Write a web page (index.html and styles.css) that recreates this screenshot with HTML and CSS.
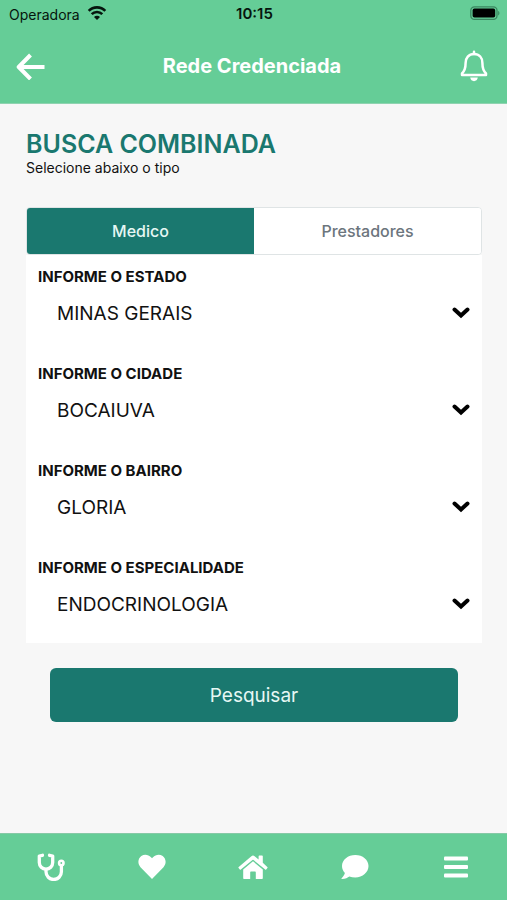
FILE: index.html
```html
<!DOCTYPE html>
<html lang="pt-BR">
<head>
<meta charset="utf-8">
<meta name="viewport" content="width=device-width, initial-scale=1">
<title>Rede Credenciada</title>
<link rel="stylesheet" href="styles.css">
</head>
<body>
<header class="top">
  <div class="status">
    <div class="carrier">
      <span>Operadora</span>
      <svg width="20" height="16" viewBox="0 0 20 16" fill="none" stroke="currentColor" stroke-width="2.6" aria-hidden="true">
        <path d="M1.700 4.900a11.600 11.600 0 0 1 16.600 0"/>
        <path d="M4.700 8.200a7.500 7.500 0 0 1 10.600 0"/>
        <path d="M10 13.900l-3-3a4.200 4.200 0 0 1 6 0z" fill="currentColor" stroke="none"/>
      </svg>
    </div>
    <time class="clock">10:15</time>
    <svg class="battery" width="30" height="16" viewBox="0 0 30 16" aria-hidden="true">
      <rect x="0.8" y="0.8" width="26.2" height="12.6" rx="3.6" fill="none" stroke="#3a8760" stroke-width="1.3"/>
      <rect x="2.6" y="2.6" width="22.6" height="9" rx="1.8" fill="#000"/>
      <path d="M28.200 5v4.400c1.600-.6 1.600-3.800 0-4.400z" fill="#3a8760"/>
    </svg>
  </div>
  <div class="bar">
    <button class="icon-btn" type="button" aria-label="Voltar">
      <svg width="30" height="28" viewBox="0 0 30 28" fill="none" stroke="currentColor" stroke-width="4" stroke-linejoin="round" aria-hidden="true">
        <path d="M14.500 3L2.700 15 14.500 27M3 15H28.500"/>
      </svg>
    </button>
    <h1 class="title">Rede Credenciada</h1>
    <button class="icon-btn end" type="button" aria-label="Notificações">
      <svg width="28" height="32" viewBox="0 0 28 32" fill="none" stroke="currentColor" stroke-width="2.500" stroke-linejoin="round" stroke-linecap="round" aria-hidden="true">
        <path d="M14 4C8.600 4 5.600 8 5.600 13c0 6-1.300 8.300-3.600 10.500V25h24v-1.500C23.700 21.300 22.400 19 22.400 13c0-5-3-9-8.400-9z"/>
        <path d="M14 1.800V4"/>
        <path d="M10.200 27.600h7.600c-.3 2.200-1.900 3.600-3.800 3.600s-3.500-1.400-3.800-3.600z" fill="currentColor" stroke="none"/>
      </svg>
    </button>
  </div>
</header>

<main class="content">
  <h2 class="heading">BUSCA COMBINADA</h2>
  <p class="sub">Selecione abaixo o tipo</p>

  <form class="search">
    <div class="tabs" role="tablist">
      <button class="tab active" type="button" role="tab" aria-selected="true">Medico</button>
      <button class="tab" type="button" role="tab" aria-selected="false">Prestadores</button>
    </div>
    <div class="fields">
      <div class="field">
        <label for="estado">INFORME O ESTADO</label>
        <div class="picker">
          <select id="estado"><option>MINAS GERAIS</option></select>
          <svg class="chevron" width="18" height="12" viewBox="0 0 18 12" aria-hidden="true"><path d="M2.500 2.500L9 8.500 15.500 2.500"/></svg>
        </div>
      </div>
      <div class="field">
        <label for="cidade">INFORME O CIDADE</label>
        <div class="picker">
          <select id="cidade"><option>BOCAIUVA</option></select>
          <svg class="chevron" width="18" height="12" viewBox="0 0 18 12" aria-hidden="true"><path d="M2.500 2.500L9 8.500 15.500 2.500"/></svg>
        </div>
      </div>
      <div class="field">
        <label for="bairro">INFORME O BAIRRO</label>
        <div class="picker">
          <select id="bairro"><option>GLORIA</option></select>
          <svg class="chevron" width="18" height="12" viewBox="0 0 18 12" aria-hidden="true"><path d="M2.500 2.500L9 8.500 15.500 2.500"/></svg>
        </div>
      </div>
      <div class="field">
        <label for="especialidade">INFORME O ESPECIALIDADE</label>
        <div class="picker">
          <select id="especialidade"><option>ENDOCRINOLOGIA</option></select>
          <svg class="chevron" width="18" height="12" viewBox="0 0 18 12" aria-hidden="true"><path d="M2.500 2.500L9 8.500 15.500 2.500"/></svg>
        </div>
      </div>
    </div>
    <button class="submit" type="button">Pesquisar</button>
  </form>
</main>

<nav class="dock" aria-label="Principal">
  <a href="#medicos" aria-label="Médicos">
    <svg width="28" height="28" viewBox="0 0 28 28" fill="none" stroke="currentColor" stroke-width="3.300" stroke-linecap="round" aria-hidden="true">
      <path d="M5.500 2.300L2.300 3v6.500a6.700 6.700 0 0 0 13.400 0V3l-3.200-.7" stroke-linejoin="round"/>
      <path d="M9 16.500v2.300a7.700 7.700 0 0 0 15.400 0V13"/>
      <circle cx="24.300" cy="10" r="2.200" stroke-width="2.600"/>
    </svg>
  </a>
  <a href="#favoritos" aria-label="Favoritos">
    <svg width="28" height="26" viewBox="0 0 28 26" fill="currentColor" aria-hidden="true">
      <path d="M14 25L2.500 13.200C-.8 9.600 0 4.300 3.300 2 6.500-.2 10.500.6 13 3.200l1 1 1-1C17.500.6 21.500-.2 24.700 2 28 4.300 28.800 9.600 25.500 13.200z"/>
    </svg>
  </a>
  <a href="#inicio" aria-label="Início">
    <svg width="30" height="26" viewBox="0 0 30 26" fill="currentColor" aria-hidden="true">
      <path d="M15 7.300L5.200 15.400V24c0 .6.400 1 1 1h6v-6.500c0-.6.400-1 1-1h3.600c.6 0 1 .4 1 1V25h6c.6 0 1-.4 1-1v-8.600z"/>
      <path d="M24.800 8.800V2.300c0-.5-.3-.8-.8-.8h-2.600c-.5 0-.8.300-.8.800v3.200l-4-3.300a2.600 2.600 0 0 0-3.200 0L.7 12.900c-.4.300-.4.800-.1 1.100l1.200 1.500c.3.300.7.400 1 .1L14.500 6a.8.8 0 0 1 1 0l11.700 9.600c.3.300.7.200 1-.1l1.200-1.500c.3-.3.300-.8-.1-1.100z"/>
    </svg>
  </a>
  <a href="#mensagens" aria-label="Mensagens">
    <svg width="28" height="26" viewBox="0 0 28 26" fill="currentColor" aria-hidden="true">
      <path d="M14.300 1C7 1 1 5.900 1 12c0 2.600 1.100 5 2.900 6.900C3.300 21.300 1.200 23.500.6 24.200c-.3.300-.1.900.4.900 3.300 0 5.900-1.600 7.300-2.600 1.800.6 3.800 1 6 1C21.700 23.500 27.500 18.200 27.500 12S21.700 1 14.300 1z"/>
    </svg>
  </a>
  <a href="#menu" aria-label="Menu">
    <svg width="26" height="24" viewBox="0 0 26 24" fill="currentColor" aria-hidden="true">
      <rect x="1" y="1.500" width="24" height="4" rx="1"/>
      <rect x="1" y="10" width="24" height="4" rx="1"/>
      <rect x="1" y="18.500" width="24" height="4" rx="1"/>
    </svg>
  </a>
</nav>
</body>
</html>
```

FILE: styles.css
```css
:root {
  --green: #65cd97;
  --teal: #1a786f;
  --page: #f7f7f7;
}

* {
  box-sizing: border-box;
}

body {
  margin: 0;
  min-height: 100vh;
  display: flex;
  flex-direction: column;
  background: var(--page);
  color: #111;
  font-family: Inter, "Liberation Sans", sans-serif;
}

button,
select {
  font-family: inherit;
}

svg {
  display: block;
}

.top {
  background: var(--green);
  border-bottom: 1px solid #8fd3b0;
}

.status {
  display: grid;
  grid-template-columns: 1fr auto 1fr;
  align-items: center;
  height: 28px;
  padding: 0 7px 0 9px;
  color: #06150d;
  font-size: 14px;
}

.carrier {
  display: flex;
  align-items: center;
  gap: 7px;
}

.clock {
  font-size: 15px;
  line-height: 18px;
  font-weight: 600;
}

.battery {
  justify-self: end;
}

.bar {
  display: grid;
  grid-template-columns: 1fr auto 1fr;
  align-items: center;
  height: 75px;
  padding: 0 19px 0 16px;
  color: #fff;
}

.title {
  margin: 0;
  font-size: 20px;
  line-height: 24px;
  font-weight: 700;
}

.icon-btn {
  justify-self: start;
  padding: 0;
  border: 0;
  background: none;
  color: inherit;
}

.icon-btn.end {
  justify-self: end;
}

.content {
  flex: 1;
  padding: 25px 25px 24px 26px;
}

.heading {
  margin: 0;
  color: var(--teal);
  font-size: 25px;
  line-height: 30px;
  font-weight: 600;
}

.sub {
  margin: 0 0 30px;
  font-size: 14px;
  line-height: 18px;
}

.tabs {
  display: grid;
  grid-template-columns: 1fr 1fr;
  height: 48px;
  border: 1px solid #dfe4e5;
  border-radius: 4px;
  background: #fff;
  overflow: hidden;
}

.tab {
  border: 0;
  background: #fff;
  color: #6c757d;
  font-size: 16px;
  font-weight: 500;
}

.tab.active {
  background: var(--teal);
  color: #e6f7f4;
}

.fields {
  background: #fff;
}

.field {
  padding: 12px 12px 13px;
}

.field label {
  display: block;
  font-size: 15px;
  line-height: 20px;
  font-weight: 700;
}

.picker {
  display: grid;
  align-items: center;
}

.picker > * {
  grid-area: 1 / 1;
}

.picker select {
  appearance: none;
  width: 100%;
  height: 52px;
  padding: 0 40px 0 19px;
  border: 0;
  background: none;
  color: #111;
  font-size: 19px;
}

.chevron {
  justify-self: end;
  pointer-events: none;
  fill: none;
  stroke: #000;
  stroke-width: 4;
  stroke-linecap: round;
}

.submit {
  display: block;
  width: calc(100% - 48px);
  height: 54px;
  margin: 25px auto 0;
  border: 0;
  border-radius: 6px;
  background: var(--teal);
  color: #e6f7f4;
  font-size: 19px;
}

.dock {
  display: grid;
  grid-template-columns: repeat(5, 1fr);
  height: 67px;
  border-top: 1px solid #86c9a6;
  background: var(--green);
}

.dock a {
  display: grid;
  place-items: center;
  color: #fff;
}
```
